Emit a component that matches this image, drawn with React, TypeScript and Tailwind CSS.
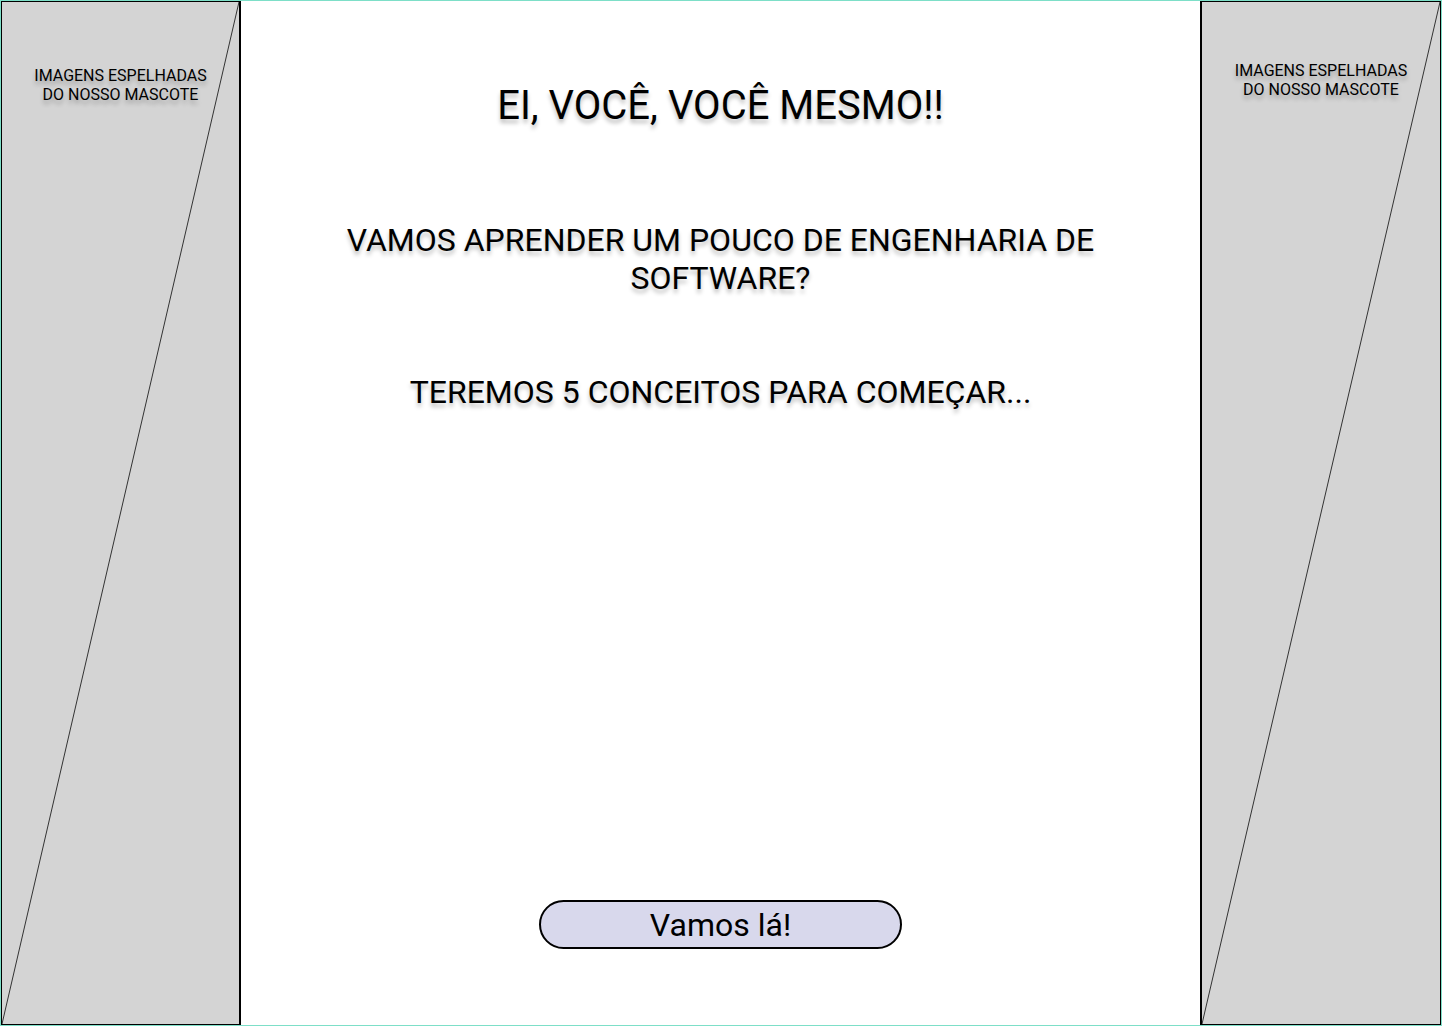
import React from "react";

const shadow = "[text-shadow:0_4px_4px_rgba(0,0,0,0.25)]";

function MascotPanel({ side }: { side: "left" | "right" }) {
  const isLeft = side === "left";
  return (
    <aside
      className={`relative h-full shrink-0 bg-[#d4d4d4] ${
        isLeft
          ? "w-[240px] border-y border-l border-r-2 border-black pt-[64px]"
          : "w-[241px] border-y border-r border-l-2 border-black pt-[59px]"
      }`}
    >
      <svg
        aria-hidden="true"
        className="absolute inset-0 h-full w-full"
        viewBox="0 0 100 100"
        preserveAspectRatio="none"
      >
        <line
          x1="100"
          y1="0"
          x2="0"
          y2="100"
          stroke="#333"
          strokeWidth="1"
          vectorEffect="non-scaling-stroke"
        />
      </svg>
      <p
        className={`relative text-center text-[16px] leading-[19px] text-black ${shadow}`}
      >
        IMAGENS ESPELHADAS
        <br />
        DO NOSSO MASCOTE
      </p>
    </aside>
  );
}

export default function App() {
  return (
    <div className="flex h-[1026px] w-[1442px] border border-[#7ddfc8] bg-white font-['Roboto',sans-serif] text-black">
      <MascotPanel side="left" />

      <main className="flex h-full flex-1 flex-col items-center pt-[81px] pb-[76px]">
        <h1 className={`text-[40px] leading-[48px] font-normal ${shadow}`}>
          EI, VOCÊ, VOCÊ MESMO!!
        </h1>

        <p
          className={`mt-[91px] w-[790px] text-center text-[32px] leading-[38px] ${shadow}`}
        >
          VAMOS APRENDER UM POUCO DE ENGENHARIA DE SOFTWARE?
        </p>

        <p className={`mt-[76px] text-center text-[32px] leading-[38px] ${shadow}`}>
          TEREMOS 5 CONCEITOS PARA COMEÇAR...
        </p>

        <button
          type="button"
          className="mt-auto flex h-[49px] w-[363px] items-center justify-center rounded-full border-2 border-black bg-[#d8d8ec] text-[32px] leading-none"
        >
          Vamos lá!
        </button>
      </main>

      <MascotPanel side="right" />
    </div>
  );
}
